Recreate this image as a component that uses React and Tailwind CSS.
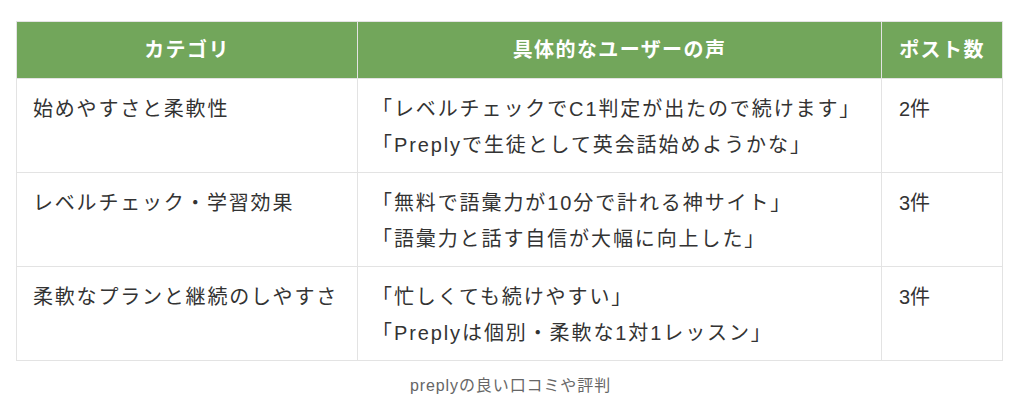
import React from "react";

const rows = [
  {
    category: "始めやすさと柔軟性",
    voices: ["「レベルチェックでC1判定が出たので続けます」", "「Preplyで生徒として英会話始めようかな」"],
    count: "2件",
  },
  {
    category: "レベルチェック・学習効果",
    voices: ["「無料で語彙力が10分で計れる神サイト」", "「語彙力と話す自信が大幅に向上した」"],
    count: "3件",
  },
  {
    category: "柔軟なプランと継続のしやすさ",
    voices: ["「忙しくても続けやすい」", "「Preplyは個別・柔軟な1対1レッスン」"],
    count: "3件",
  },
];

export default function App() {
  return (
    <div
      className="w-[1024px] h-[418px] bg-white pt-[21px] px-[16px]"
      style={{ fontFamily: '"Liberation Sans", "Noto Sans CJK JP", sans-serif' }}
    >
      <table className="w-[986px] border-collapse table-fixed text-[#333]">
        <colgroup>
          <col className="w-[341px]" />
          <col className="w-[524px]" />
          <col className="w-[121px]" />
        </colgroup>
        <thead>
          <tr className="bg-[#72a65b] text-white h-[57px]">
            <th className="border border-[#e3e3e3] font-bold text-[20px] tracking-[1.4px] text-center">カテゴリ</th>
            <th className="border border-[#e3e3e3] font-bold text-[20px] tracking-[1.4px] text-center">具体的なユーザーの声</th>
            <th className="border border-[#e3e3e3] font-bold text-[20px] tracking-[1.4px] text-center">ポスト数</th>
          </tr>
        </thead>
        <tbody>
          {rows.map((r) => (
            <tr key={r.category} className="h-[94px]">
              <td className="border border-[#e3e3e3] align-top px-[16px] pt-[12px] pb-[8px] text-[20px] leading-[36px] tracking-[1.8px]">
                {r.category}
              </td>
              <td className="border border-[#e3e3e3] align-top px-[14px] pt-[12px] pb-[8px] text-[20px] leading-[36px] tracking-[1.9px]">
                {r.voices.map((v) => (
                  <div key={v}>{v}</div>
                ))}
              </td>
              <td className="border border-[#e3e3e3] align-top px-[17px] pt-[12px] pb-[8px] text-[20px] leading-[36px]">
                {r.count}
              </td>
            </tr>
          ))}
        </tbody>
      </table>
      <p className="mt-[13px] text-center text-[16px] text-[#666] tracking-[0.9px] pr-[3px]">preplyの良い口コミや評判</p>
    </div>
  );
}
